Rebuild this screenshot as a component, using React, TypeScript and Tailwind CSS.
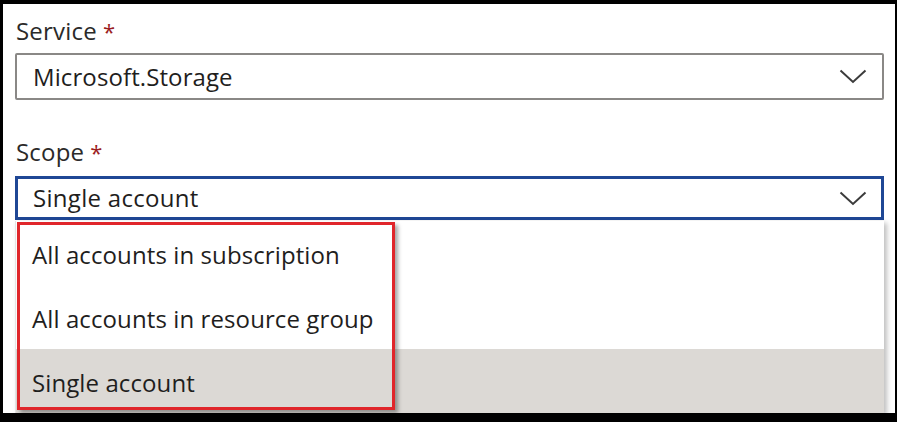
import { useState } from "react";

const FONT = "font-['Segoe_UI','Open_Sans','Noto_Sans',sans-serif]";

function Chevron() {
  return (
    <svg width="28" height="15" viewBox="0 0 28 15" fill="none" className="shrink-0">
      <path d="M1.5 1.5 L14 13 L26.5 1.5" stroke="#3b3b3b" strokeWidth="2" strokeLinejoin="miter" />
    </svg>
  );
}

function Label({ text }: { text: string }) {
  return (
    <div className="h-[30px] flex items-center pl-[1px] text-[24px] tracking-[0.2px] text-[#2b2a29]">
      {text}
      <span className="ml-[6px] text-[#9b1c22] text-[22px] leading-none">*</span>
    </div>
  );
}

const options = [
  "All accounts in subscription",
  "All accounts in resource group",
  "Single account",
];

export default function App() {
  const [scope] = useState("Single account");

  return (
    <div className={`w-[897px] h-[422px] bg-black pt-[4px] pl-[3px] pr-[2px] pb-[9px] ${FONT}`}>
      <div className="relative h-full bg-white overflow-hidden pl-[12px] pr-[11px] pt-[12px]">
        <Label text="Service" />
        <div className="mt-[7px] h-[47px] border-2 border-[#8a8886] rounded-[2px] flex items-center justify-between pl-[16px] pr-[15px] text-[24px] tracking-[0.1px] text-[#1f1e1d]">
          <span>Microsoft.Storage</span>
          <Chevron />
        </div>

        <div className="mt-[37px]">
          <Label text="Scope" />
        </div>
        <div className="mt-[9px] h-[44px] border-[3px] border-[#1f4795] flex items-center justify-between pl-[15px] pr-[14px] text-[24px] tracking-[0.3px] text-[#1f1e1d]">
          <span>{scope}</span>
          <Chevron />
        </div>

        {/* dropdown list */}
        <div className="mt-[1px] bg-white shadow-[3px_2px_5px_rgba(0,0,0,0.25)] border-l border-[#e5e5e5]">
          {options.map((o) => (
            <div
              key={o}
              className={`h-[64px] flex items-center pl-[16px] pt-[4px] text-[24px] tracking-[0.1px] text-[#1f1e1d] ${
                o === scope ? "bg-[#dcd9d5]" : "bg-white"
              }`}
            >
              {o}
            </div>
          ))}
        </div>

        {/* annotation box */}
        <div className="absolute left-[14px] top-[218px] w-[378px] h-[188px] border-[3px] border-[#e0262b] shadow-[3px_3px_4px_rgba(0,0,0,0.35)] pointer-events-none" />
      </div>
    </div>
  );
}
